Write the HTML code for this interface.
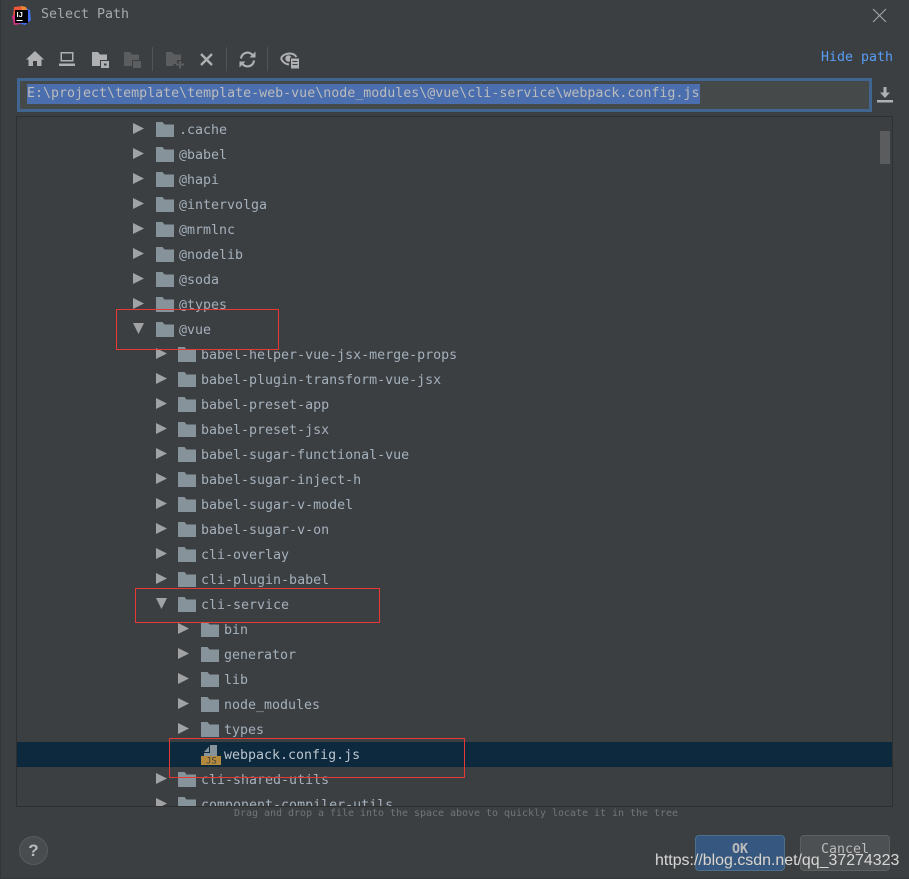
<!DOCTYPE html>
<html><head><meta charset="utf-8"><style>
html,body{margin:0;padding:0;background:#3c3f41}
#p{position:relative;width:909px;height:879px;overflow:hidden;background:#3c3f41;font-family:"DejaVu Sans Mono","Liberation Mono",monospace;font-size:13.3px;color:#a9b7c6}
.a{position:absolute}
.t{position:absolute;white-space:pre;height:18px;line-height:18px;color:#a4b0bc}
.r{position:absolute;border:1px solid #e53935;box-sizing:border-box}
svg{position:absolute;overflow:visible}
</style></head><body><div id="p">
<svg width="0" height="0" style="position:absolute"><defs>
<symbol id="f" viewBox="0 0 18 15"><path d="M0 0H6.500L8.500 2.500H18V15H0Z" fill="#87939a"/></symbol>
<symbol id="ar" viewBox="0 0 12 12"><path d="M0 0L11 5.500L0 11Z" fill="#a0a2a4"/></symbol>
<symbol id="ad" viewBox="0 0 12 12"><path d="M0 0H11L5.500 11Z" fill="#a0a2a4"/></symbol>
</defs></svg>

<div class="a" style="left:0;top:0;width:1px;height:879px;background:#333638"></div>
<div class="a" style="left:0;top:878px;width:909px;height:1px;background:#333638"></div>

<svg style="left:11px;top:5px" width="21" height="21" viewBox="0 0 21 21">
<path d="M3 2L12 1L13 10L2 12Z" fill="#f0563a"/>
<path d="M1 11L8 8L10 19L3 20Z" fill="#d1307f"/>
<path d="M11 1L19 5L20 15L14 20L7 18Z" fill="#3f6ff0"/>
<path d="M10 1L15 2L17 8L11 8Z" fill="#f08a30"/>
<rect x="4" y="5" width="13" height="13" fill="#000"/>
<text x="5.500" y="12" font-family="Liberation Sans" font-size="7.500" font-weight="bold" fill="#fff">IJ</text>
<rect x="5.500" y="15" width="6" height="1" fill="#fff"/>
</svg>
<div class="t" style="left:41px;top:6px;color:#a6a9ab">Select Path</div>
<svg style="left:872px;top:8px" width="15" height="15" viewBox="0 0 15 15"><path d="M1 1L14 14M14 1L1 14" stroke="#a0a2a4" stroke-width="1.200"/></svg>

<svg style="left:26px;top:50px" width="18" height="18" viewBox="0 0 18 18"><path d="M9 1L18 9.500H15.500V16H11V11H7V16H2.500V9.500H0Z" fill="#aeb0b2"/></svg>
<svg style="left:58px;top:51px" width="18" height="16" viewBox="0 0 18 16"><path d="M2.500 1H15.500V10.500H2.500ZM4 2.500V9H14V2.500Z" fill="#aeb0b2" fill-rule="evenodd"/><rect x="1" y="12.500" width="16" height="2.500" fill="#aeb0b2"/></svg>
<svg style="left:92px;top:52px" width="18" height="17" viewBox="0 0 18 17"><path d="M0 0H6L8 2.500H15V8H8V14H0Z" fill="#aeb0b2"/><path d="M9 9H17V16H9ZM12 11.500V13.500H14.500V11.500Z" fill="#aeb0b2" fill-rule="evenodd"/></svg>
<svg style="left:124px;top:52px" width="18" height="17" viewBox="0 0 18 17"><path d="M0 0H6L8 2.500H15V8H8V14H0Z" fill="#5b5d5e"/><rect x="9" y="9" width="8" height="7" fill="#5b5d5e"/></svg>
<div class="a" style="left:152px;top:47px;width:1px;height:24px;background:#515355"></div>
<svg style="left:166px;top:52px" width="19" height="17" viewBox="0 0 19 17"><path d="M0 0H6L8 2.500H15V8H11V12H7.500V14H0Z" fill="#5b5d5e"/><path d="M13 9H15V11.500H18V13.500H15V16.500H13V13.500H10V11.500H13Z" fill="#5b5d5e"/></svg>
<svg style="left:200px;top:53px" width="13" height="13" viewBox="0 0 13 13"><path d="M1 1L12 12M12 1L1 12" stroke="#aeb0b2" stroke-width="2.400"/></svg>
<div class="a" style="left:226px;top:47px;width:1px;height:24px;background:#515355"></div>
<svg style="left:239px;top:51px" width="17" height="17" viewBox="0 0 17 17"><path d="M2 7.500A6.500 6.500 0 0 1 13.500 4" fill="none" stroke="#aeb0b2" stroke-width="2.200"/><path d="M10.500 6.500H16.500V0.500Z" fill="#aeb0b2"/><path d="M15 9.500A6.500 6.500 0 0 1 3.500 13" fill="none" stroke="#aeb0b2" stroke-width="2.200"/><path d="M6.500 10.500H0.500V16.500Z" fill="#aeb0b2"/></svg>
<div class="a" style="left:267px;top:47px;width:1px;height:24px;background:#515355"></div>
<svg style="left:280px;top:50px" width="20" height="20" viewBox="0 0 20 20"><path d="M1 8.500C3 3 13 1.500 16.500 7" fill="none" stroke="#aeb0b2" stroke-width="2"/><path d="M1 8.500C2.500 12 5 14 9 14.500" fill="none" stroke="#aeb0b2" stroke-width="2"/><circle cx="8.500" cy="8.500" r="3.200" fill="#aeb0b2"/><path d="M10 7.500H19.500V19H10Z" fill="#3c3f41"/><path d="M11 8.500H19V18.500H11ZM12.500 11V12H17.500V11ZM12.500 14V15H17.500V14Z" fill="#aeb0b2" fill-rule="evenodd"/></svg>

<div class="t" style="left:821px;top:49px;color:#589df6">Hide path</div>

<div class="a" style="left:17px;top:78px;width:855px;height:34px;box-sizing:border-box;border:3px solid #3f6590;background:#45494a"></div>
<div class="a" style="left:27px;top:84px;width:673px;height:20px;background:#4b6eaf"></div>
<div class="t" style="left:27px;top:85px;color:#bbbbbb">E:\project\template\template-web-vue\node_modules\@vue\cli-service\webpack.config.js</div>
<svg style="left:877px;top:87px" width="16" height="16" viewBox="0 0 16 16"><path d="M6.500 0H9.500V5.500H13L8 11L3 5.500H6.500Z" fill="#aeb0b2"/><rect x="0" y="13" width="16" height="2.500" fill="#aeb0b2"/></svg>

<div class="a" style="left:16px;top:116px;width:877px;height:691px;box-sizing:border-box;border:1px solid #2f2f2f"></div>
<div class="a" style="left:17px;top:742px;width:875px;height:25px;background:#0d293e"></div>
<div class="a" style="left:880px;top:131px;width:10px;height:33px;background:#5a5c5e"></div>

<div class="a" id="rows" style="left:0;top:0;width:892px;height:806px;overflow:hidden">
<svg style="left:133px;top:123px" width="12" height="12"><use href="#ar"/></svg><svg style="left:156px;top:122px" width="18" height="15"><use href="#f"/></svg><div class="t" style="left:179px;top:122px">.cache</div>
<svg style="left:133px;top:148px" width="12" height="12"><use href="#ar"/></svg><svg style="left:156px;top:147px" width="18" height="15"><use href="#f"/></svg><div class="t" style="left:179px;top:147px">@babel</div>
<svg style="left:133px;top:173px" width="12" height="12"><use href="#ar"/></svg><svg style="left:156px;top:172px" width="18" height="15"><use href="#f"/></svg><div class="t" style="left:179px;top:172px">@hapi</div>
<svg style="left:133px;top:198px" width="12" height="12"><use href="#ar"/></svg><svg style="left:156px;top:197px" width="18" height="15"><use href="#f"/></svg><div class="t" style="left:179px;top:197px">@intervolga</div>
<svg style="left:133px;top:223px" width="12" height="12"><use href="#ar"/></svg><svg style="left:156px;top:222px" width="18" height="15"><use href="#f"/></svg><div class="t" style="left:179px;top:222px">@mrmlnc</div>
<svg style="left:133px;top:248px" width="12" height="12"><use href="#ar"/></svg><svg style="left:156px;top:247px" width="18" height="15"><use href="#f"/></svg><div class="t" style="left:179px;top:247px">@nodelib</div>
<svg style="left:133px;top:273px" width="12" height="12"><use href="#ar"/></svg><svg style="left:156px;top:272px" width="18" height="15"><use href="#f"/></svg><div class="t" style="left:179px;top:272px">@soda</div>
<svg style="left:133px;top:298px" width="12" height="12"><use href="#ar"/></svg><svg style="left:156px;top:297px" width="18" height="15"><use href="#f"/></svg><div class="t" style="left:179px;top:297px">@types</div>
<svg style="left:133px;top:323px" width="12" height="12"><use href="#ad"/></svg><svg style="left:156px;top:322px" width="18" height="15"><use href="#f"/></svg><div class="t" style="left:179px;top:322px">@vue</div>
<svg style="left:156px;top:348px" width="12" height="12"><use href="#ar"/></svg><svg style="left:178px;top:347px" width="18" height="15"><use href="#f"/></svg><div class="t" style="left:201px;top:347px">babel-helper-vue-jsx-merge-props</div>
<svg style="left:156px;top:373px" width="12" height="12"><use href="#ar"/></svg><svg style="left:178px;top:372px" width="18" height="15"><use href="#f"/></svg><div class="t" style="left:201px;top:372px">babel-plugin-transform-vue-jsx</div>
<svg style="left:156px;top:398px" width="12" height="12"><use href="#ar"/></svg><svg style="left:178px;top:397px" width="18" height="15"><use href="#f"/></svg><div class="t" style="left:201px;top:397px">babel-preset-app</div>
<svg style="left:156px;top:423px" width="12" height="12"><use href="#ar"/></svg><svg style="left:178px;top:422px" width="18" height="15"><use href="#f"/></svg><div class="t" style="left:201px;top:422px">babel-preset-jsx</div>
<svg style="left:156px;top:448px" width="12" height="12"><use href="#ar"/></svg><svg style="left:178px;top:447px" width="18" height="15"><use href="#f"/></svg><div class="t" style="left:201px;top:447px">babel-sugar-functional-vue</div>
<svg style="left:156px;top:473px" width="12" height="12"><use href="#ar"/></svg><svg style="left:178px;top:472px" width="18" height="15"><use href="#f"/></svg><div class="t" style="left:201px;top:472px">babel-sugar-inject-h</div>
<svg style="left:156px;top:498px" width="12" height="12"><use href="#ar"/></svg><svg style="left:178px;top:497px" width="18" height="15"><use href="#f"/></svg><div class="t" style="left:201px;top:497px">babel-sugar-v-model</div>
<svg style="left:156px;top:523px" width="12" height="12"><use href="#ar"/></svg><svg style="left:178px;top:522px" width="18" height="15"><use href="#f"/></svg><div class="t" style="left:201px;top:522px">babel-sugar-v-on</div>
<svg style="left:156px;top:548px" width="12" height="12"><use href="#ar"/></svg><svg style="left:178px;top:547px" width="18" height="15"><use href="#f"/></svg><div class="t" style="left:201px;top:547px">cli-overlay</div>
<svg style="left:156px;top:573px" width="12" height="12"><use href="#ar"/></svg><svg style="left:178px;top:572px" width="18" height="15"><use href="#f"/></svg><div class="t" style="left:201px;top:572px">cli-plugin-babel</div>
<svg style="left:156px;top:598px" width="12" height="12"><use href="#ad"/></svg><svg style="left:178px;top:597px" width="18" height="15"><use href="#f"/></svg><div class="t" style="left:201px;top:597px">cli-service</div>
<svg style="left:178px;top:623px" width="12" height="12"><use href="#ar"/></svg><svg style="left:201px;top:622px" width="18" height="15"><use href="#f"/></svg><div class="t" style="left:224px;top:622px">bin</div>
<svg style="left:178px;top:648px" width="12" height="12"><use href="#ar"/></svg><svg style="left:201px;top:647px" width="18" height="15"><use href="#f"/></svg><div class="t" style="left:224px;top:647px">generator</div>
<svg style="left:178px;top:673px" width="12" height="12"><use href="#ar"/></svg><svg style="left:201px;top:672px" width="18" height="15"><use href="#f"/></svg><div class="t" style="left:224px;top:672px">lib</div>
<svg style="left:178px;top:698px" width="12" height="12"><use href="#ar"/></svg><svg style="left:201px;top:697px" width="18" height="15"><use href="#f"/></svg><div class="t" style="left:224px;top:697px">node_modules</div>
<svg style="left:178px;top:723px" width="12" height="12"><use href="#ar"/></svg><svg style="left:201px;top:722px" width="18" height="15"><use href="#f"/></svg><div class="t" style="left:224px;top:722px">types</div>
<svg style="left:201px;top:745px" width="20" height="20" viewBox="0 0 20 20"><path d="M9 0H16V11H3V8H9Z" fill="#87939a"/><path d="M3 7L8 1.500V7Z" fill="#87939a"/><rect x="0" y="11" width="20" height="9" fill="#b58a3c"/><text x="5" y="18.500" font-family="DejaVu Sans Mono" font-size="9" fill="#3c3f41">JS</text></svg><div class="t" style="left:224px;top:747px;color:#bbc4cc">webpack.config.js</div>
<svg style="left:156px;top:773px" width="12" height="12"><use href="#ar"/></svg><svg style="left:178px;top:772px" width="18" height="15"><use href="#f"/></svg><div class="t" style="left:201px;top:772px">cli-shared-utils</div>
<svg style="left:156px;top:798px" width="12" height="12"><use href="#ar"/></svg><svg style="left:178px;top:797px" width="18" height="15"><use href="#f"/></svg><div class="t" style="left:201px;top:797px">component-compiler-utils</div>
</div>

<div class="t" style="left:234px;top:805px;font-size:10px;color:#727476;letter-spacing:-0.02px">Drag and drop a file into the space above to quickly locate it in the tree</div>

<div class="r" style="left:116px;top:309px;width:163px;height:41px"></div>
<div class="r" style="left:135px;top:588px;width:245px;height:35px"></div>
<div class="r" style="left:169px;top:738px;width:296px;height:40px"></div>

<div class="a" style="left:19px;top:836px;width:29px;height:29px;box-sizing:border-box;border:1px solid #585b5d;border-radius:50%;background:#494c4e;color:#b8babc;font-family:'Liberation Sans',sans-serif;font-weight:bold;font-size:17px;line-height:27px;text-align:center">?</div>

<div class="a" style="left:695px;top:835px;width:90px;height:36px;box-sizing:border-box;border:1px solid #4c708c;border-radius:4px;background:#365880;color:#bbbbbb;font-weight:bold;text-align:center;line-height:28px">OK</div>
<div class="a" style="left:800px;top:835px;width:90px;height:36px;box-sizing:border-box;border:1px solid #5e6060;border-radius:4px;background:#4c5052;color:#bbbbbb;text-align:center;line-height:28px">Cancel</div>

<div class="a" style="left:655px;top:851px;white-space:pre;font-family:'Liberation Sans',Arial,sans-serif;font-size:15.93px;line-height:20px;color:#d6d6d6;text-shadow:0 0 1px #555">https://blog.csdn.net/qq_37274323</div>
</div></body></html>
